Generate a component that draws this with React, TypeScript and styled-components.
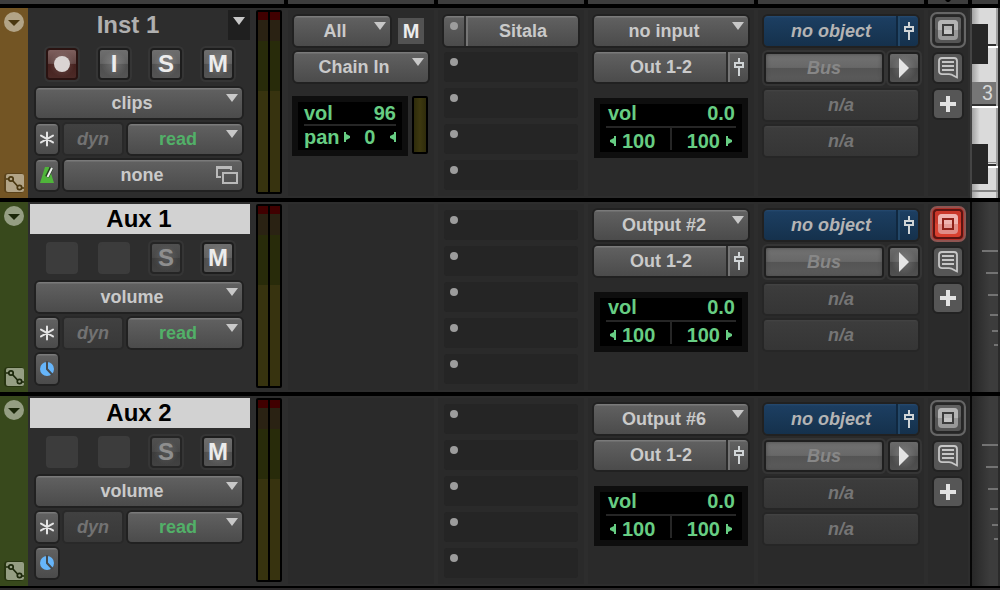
import React from "react";
import styled, { createGlobalStyle, css } from "styled-components";

const GlobalStyle = createGlobalStyle`
  * { box-sizing: border-box; }
  body { margin: 0; background: #000; font-family: "Liberation Sans", Arial, sans-serif; }
  button, select { font-family: inherit; font-weight: bold; margin: 0; padding: 0; border: 0; }
  svg { display: block; flex: none; }
`;

const columns = css`
  display: grid;
  grid-template-columns: 28px 258fr 150fr 150fr 170fr 170fr 44px 30px;
`;

const Page = styled.main`
  display: flex;
  flex-direction: column;
  gap: 4px;
  min-height: 100vh;
`;

const HeaderStrip = styled.div`
  ${columns}
  height: 4px;
`;

const HeaderCell = styled.div<{ $span?: number; $first?: boolean }>`
  grid-column: span ${(p) => p.$span ?? 1};
  margin: 0 2px 0 ${(p) => (p.$first ? 0 : 2)}px;
  background: #3d3d3d;
  display: flex;
  justify-content: center;
`;

const TrackRow = styled.section`
  ${columns}
  min-height: 190px;
`;

const Footer = styled.div`
  flex: 1;
  margin-top: -2px;
  background: #2a2829;
`;

const ColorBar = styled.div<{ $color: string }>`
  display: flex;
  flex-direction: column;
  justify-content: space-between;
  align-items: center;
  padding: 4px 0;
  background: ${(p) => p.$color};
`;

const BarButton = styled.button`
  background: none;
`;

const TrackCell = styled.div`
  display: flex;
  gap: 4px;
  padding-right: 4px;
  background: #2d2d2d;
`;

const TrackControls = styled.div`
  flex: 1;
  min-width: 0;
  display: flex;
  flex-direction: column;
  gap: 10px;
  padding: 2px;
`;

const NameBar = styled.div<{ $selected: boolean }>`
  display: flex;
  height: 30px;
  background: ${(p) => (p.$selected ? "#d2d2d2" : "transparent")};
`;

const NameButton = styled.button<{ $selected: boolean }>`
  flex: 1;
  padding-right: 2px;
  background: none;
  font-size: 24px;
  line-height: 30px;
  color: ${(p) => (p.$selected ? "#000" : "#b0b0b0")};
`;

const PlaylistButton = styled.button`
  width: 22px;
  height: 30px;
  padding: 6px 4px 0;
  background: #1f1f1f;
`;

const ModeButtons = styled.div`
  display: flex;
  gap: 24px;
  padding-left: 18px;
`;

const modeColors = {
  normal: { back: "radial-gradient(circle, #ffffff30, #ffffff00 65%), linear-gradient(#6e6e6e, #626262 48%, #4e4e4e 50%, #545454)", edge: "#1d1d1d", text: "#ececec" },
  record: { back: "radial-gradient(circle, #ffffff28, #ffffff00 65%), linear-gradient(#7e5f5d, #624543 48%, #46211e 50%, #4c2a27)", edge: "#2a1311", text: "#d9d3d2" },
  dim: { back: "radial-gradient(circle, #ffffff20, #ffffff00 65%), linear-gradient(#505050, #484848 48%, #3c3c3c 50%, #424242)", edge: "#252525", text: "#8e8e8e" },
  empty: { back: "#3c3c3c", edge: "#3c3c3c", text: "#3c3c3c" },
};

type Mode = keyof typeof modeColors;

const ModeButton = styled.button<{ $mode: Mode }>`
  display: flex;
  align-items: center;
  justify-content: center;
  width: 28px;
  height: 28px;
  border-radius: 2px;
  font-size: 24px;
  line-height: 28px;
  background: ${(p) => modeColors[p.$mode].back};
  color: ${(p) => modeColors[p.$mode].text};
  box-shadow: 0 0 0 2px ${(p) => modeColors[p.$mode].edge}${(p) => (p.$mode === "empty" ? "" : ", 0 0 0 4px #353535")};
`;

const ControlList = styled.div`
  display: flex;
  flex-direction: column;
  gap: 6px;
  padding: 0 8px 0 6px;
`;

const ControlLine = styled.div`
  display: flex;
  gap: 6px;
`;

const face = css`
  background: linear-gradient(#7a7a7a 0, #7a7a7a 1px, #606060 2px, #4b4b4b 100%);
  box-shadow: 0 0 0 2px #212121;
`;

const SelectBox = styled.div`
  position: relative;
  display: flex;
  flex: 1;
  min-width: 0;
  height: 30px;
  border-radius: 4px;
  ${face}
`;

const SelectInput = styled.select<{ $green?: boolean }>`
  appearance: none;
  width: 100%;
  height: 30px;
  padding: 0 14px 0 0;
  background: none;
  text-align: center;
  text-align-last: center;
  font-size: 18px;
  color: ${(p) => (p.$green ? "#52b068" : "#cacaca")};
`;

const SelectArrow = styled.span`
  position: absolute;
  top: 6px;
  right: 4px;
  pointer-events: none;
`;

const IconButton = styled.button`
  display: flex;
  align-items: center;
  justify-content: center;
  width: 22px;
  height: 30px;
  border-radius: 4px;
  ${face}
`;

const DynButton = styled.button`
  width: 58px;
  height: 30px;
  border-radius: 3px;
  background: linear-gradient(#414141, #383838);
  box-shadow: 0 0 0 2px #292929;
  color: #727272;
  font-size: 18px;
  font-style: italic;
`;

const WindowButton = styled.button`
  display: flex;
  align-items: center;
  flex: 1;
  height: 30px;
  padding: 0 4px;
  border-radius: 4px;
  color: #cacaca;
  font-size: 18px;
  ${face}
`;

const Grow = styled.span`
  flex: 1;
`;

const Meter = styled.div`
  display: flex;
  gap: 2px;
  margin: 2px 0 4px;
  padding: 2px;
  width: 26px;
  background: #000;
  border-radius: 2px;
`;

const MeterBar = styled.div`
  flex: 1;
  background: linear-gradient(
    #400000 0, #400000 8px,
    #2a2213 8px, #2a2213 29px,
    #282b0a 29px, #282b0a 79px,
    #37330f 79px
  );
`;

const Cell = styled.div`
  display: flex;
  flex-direction: column;
  gap: 6px;
  padding: 8px;
  background: #2a2a2a;
  box-shadow: inset 0 0 0 2px #2d2d2d;
`;

const MidiMute = styled.button`
  width: 26px;
  height: 26px;
  margin: 2px 4px 2px 2px;
  background: #525252;
  color: #ececec;
  font-size: 20px;
  line-height: 26px;
`;

const LowerLine = styled.div`
  display: flex;
  gap: 4px;
  margin: 8px 0 0 -2px;
`;

const ScreenBox = styled.div`
  flex: 1;
  height: 60px;
  border: 6px solid #0e0e0e;
  background: #000;
  color: #67cd83;
  font-size: 20px;
  font-weight: bold;
  padding: 0 6px;
`;

const ScreenLine = styled.div`
  display: flex;
  align-items: center;
  justify-content: space-between;
  height: 22px;
  line-height: 22px;
`;

const ScreenTop = styled(ScreenLine)`
  border-bottom: 2px solid #262626;
  height: 24px;
`;

const PanLine = styled(ScreenLine)`
  gap: 4px;
`;

const PanValue = styled.span`
  flex: 1;
  text-align: center;
`;

const OutputScreen = styled(ScreenBox)`
  flex: none;
  margin-top: 10px;
`;

const OutputTop = styled(ScreenTop)`
  align-items: flex-start;
  padding: 0 1px 0 2px;
  line-height: 18px;
`;

const PanPair = styled.div`
  display: flex;
`;

const PanHalf = styled.div`
  display: flex;
  align-items: center;
  gap: 6px;
  flex: 1;
  height: 22px;
  padding: 4px 4px 0;
  line-height: 22px;
  & + & {
    justify-content: flex-end;
    border-left: 2px solid #262626;
  }
`;

const SmallMeter = styled.div`
  width: 16px;
  height: 58px;
  border: 2px solid #000;
  border-radius: 2px;
  background: linear-gradient(90deg, #2f2c0c, #3d380f 50%, #2f2c0c);
`;

const Split = styled.div<{ $blue?: boolean }>`
  display: flex;
  height: 30px;
  border-radius: 4px;
  ${face}
  ${(p) => p.$blue && css`background: linear-gradient(#264a70 0, #1c3e61 2px, #15314c 100%);`}
`;

const SplitMain = styled.button<{ $blue?: boolean }>`
  flex: 1;
  background: none;
  font-size: 18px;
  color: ${(p) => (p.$blue ? "#b4b4b4" : "#cacaca")};
  font-style: ${(p) => (p.$blue ? "italic" : "normal")};
`;

const SplitSide = styled.button<{ $blue?: boolean }>`
  display: flex;
  align-items: center;
  justify-content: center;
  width: 20px;
  background: none;
  box-shadow: -2px 0 0 0 ${(p) => (p.$blue ? "#102840" : "#2c2c2c")};
  border-left: 2px solid ${(p) => (p.$blue ? "#234869" : "#757575")};
`;

const InsertBypass = styled.button`
  width: 22px;
  padding: 6px 6px 16px;
  background: none;
  border-right: 2px solid #2c2c2c;
`;

const InsertName = styled(SplitMain)`
  border-left: 2px solid #757575;
`;

const EmptySlot = styled.button`
  height: 30px;
  padding: 6px 6px 16px;
  border-radius: 3px;
  background: #252525;
`;

const Dot = styled.span`
  display: block;
  width: 8px;
  height: 8px;
  border-radius: 4px;
  background: #9c9c9c;
`;

const BusLine = styled.div`
  display: flex;
  gap: 8px;
  height: 32px;
  padding: 2px 0 2px 2px;
`;

const BusButton = styled.button`
  flex: 1;
  height: 28px;
  border-radius: 2px;
  background: linear-gradient(#727272, #686868 48%, #545454 50%, #5c5c5c);
  box-shadow: 0 0 0 2px #1f1f1f, 0 0 0 4px #353535, inset 0 0 4px #484848;
  color: #878787;
  font-size: 18px;
  font-style: italic;
`;

const PlayButton = styled.button`
  display: flex;
  align-items: center;
  justify-content: center;
  width: 28px;
  height: 28px;
  border-radius: 2px;
  background: radial-gradient(circle, #ffffff30, #ffffff00 65%), linear-gradient(#6a6a6a, #5c5c5c 48%, #484848 50%, #505050);
  box-shadow: 0 0 0 2px #1f1f1f, 0 0 0 4px #353535;
`;

const EmptyParam = styled.button`
  height: 30px;
  border-radius: 3px;
  background: linear-gradient(#444 0, #3c3c3c 2px, #353535 100%);
  box-shadow: 0 0 0 2px #262626;
  color: #757575;
  font-size: 18px;
  font-style: italic;
`;

const ToolCell = styled(Cell)`
  align-items: center;
  gap: 8px;
  padding: 4px 0;
`;

const TargetButton = styled.button`
  height: 34px;
  background: none;
`;

const ToolButton = styled.button`
  display: flex;
  align-items: center;
  justify-content: center;
  width: 28px;
  height: 28px;
  border-radius: 4px;
  background: #565656;
  box-shadow: 0 0 0 2px #222;
`;

const Lane = styled.div<{ $light?: boolean }>`
  border-left: 2px solid ${(p) => (p.$light ? "#444" : "#060606")};
  border-right: 2px solid #2a2a2a;
  background: linear-gradient(90deg, #272727, #3c3c3c 18px);
`;

const DownArrow = () => (
  <svg width="12" height="8" viewBox="0 0 12 8" fill="#c8c8c8"><path d="M0 0H12L6 8Z" /></svg>
);

const PlaylistArrow = () => (
  <svg width="14" height="22" viewBox="0 0 14 22" fill="#c8c8c8"><path d="M1 0H13L7 8Z" /></svg>
);

const FaderIcon = () => (
  <svg width="10" height="18" viewBox="0 0 10 18" fill="none" stroke="#d0d4d6" strokeWidth="2">
    <path d="M5 0V4M5 10V18M1 5H9V9H1Z" />
  </svg>
);

const PanMark = ({ flip }: { flip?: boolean }) => (
  <svg width="6" height="10" viewBox="0 0 6 10" fill="#67cd83">
    <path d={flip ? "M6 0V10H4V8L0 6V4L4 2V0Z" : "M0 0V10H2V8L6 6V4L2 2V0Z"} />
  </svg>
);

const FoldIcon = ({ tint, ink }: { tint: string; ink: string }) => (
  <svg width="20" height="20" viewBox="0 0 20 20">
    <circle cx="10" cy="10" r="10" fill={tint} />
    <path d="M4 8H16L10 14Z" fill={ink} />
  </svg>
);

const CurveIcon = ({ tint, ink, edge }: { tint: string; ink: string; edge: string }) => (
  <svg width="22" height="22" viewBox="0 0 22 22">
    <rect x="1" y="1" width="20" height="20" rx="4" fill={edge} />
    <rect x="3" y="2" width="18" height="18" rx="2" fill={tint} />
    <g stroke={ink} strokeWidth="1.700" fill={tint}>
      <path d="M3 7H6.500M9.500 8.500L14.500 14M18 16H21" />
      <circle cx="8" cy="7" r="2.200" />
      <circle cx="16.500" cy="15.500" r="2.200" />
    </g>
  </svg>
);

const AsteriskIcon = () => (
  <svg width="16" height="16" viewBox="0 0 16 16" stroke="#e4e4e4" strokeWidth="2" strokeLinecap="round">
    <path d="M8 1.500V14.500M2 4.600L14 11.400M14 4.600L2 11.400" />
  </svg>
);

const MetronomeIcon = () => (
  <svg width="16" height="18" viewBox="0 0 16 18">
    <path d="M6 1H10L15 17H1Z" fill="#4fb53a" />
    <path d="M8 11L12.500 2" stroke="#26401f" strokeWidth="4" />
    <path d="M8.500 11L13 2" stroke="#f2f2f2" strokeWidth="2" />
  </svg>
);

const TimebaseIcon = () => (
  <svg width="16" height="16" viewBox="0 0 16 16">
    <circle cx="8" cy="8" r="7" fill="#66b5fa" />
    <path d="M8 0V8L13.500 14" fill="none" stroke="#454a4e" strokeWidth="2" />
  </svg>
);

const WindowsIcon = () => (
  <svg width="22" height="18" viewBox="0 0 22 18" fill="none" stroke="#b9b9b9" strokeWidth="2">
    <path d="M5 11H1V1H15V4" />
    <path d="M1 1.500H15" strokeWidth="3" />
    <path d="M7 7H21V17H7Z" />
  </svg>
);

const PlayIcon = () => (
  <svg width="10" height="20" viewBox="0 0 10 20" fill="#e4e4e4"><path d="M0 0L10 10L0 20Z" /></svg>
);

const TargetIcon = ({ active }: { active?: boolean }) => {
  const c = active
    ? { ring: "#8f5552", gap: "#5a1512", base: "#c9372a", low: "#d9402f", hi: "#efb3af", lo: "#e08e88", ink: "#8f2119" }
    : { ring: "#666", gap: "#262626", base: "#616161", low: "#555", hi: "#b4b4b4", lo: "#999", ink: "#3c3c3c" };
  return (
    <svg width="36" height="36" viewBox="0 0 36 36">
      <rect x="1" y="1" width="34" height="34" rx="6" fill={active ? "#b0332b" : "#2f2f2f"} stroke={c.ring} strokeWidth="2" />
      <rect x="3" y="3" width="30" height="30" rx="4" fill={c.gap} />
      <rect x="5" y="5" width="26" height="26" rx="3" fill={c.low} />
      <rect x="5" y="5" width="26" height="13" rx="3" fill={c.base} />
      <rect x="8" y="8" width="20" height="20" rx="4" fill={c.lo} />
      <path d="M8 18V12a4 4 0 0 1 4-4H24a4 4 0 0 1 4 4V18Z" fill={c.hi} />
      <rect x="13" y="13" width="10" height="10" fill={c.hi} stroke={c.ink} strokeWidth="2" />
      <rect x="14" y="18" width="8" height="4" fill={active ? "#e59c97" : "#c4c4c4"} />
    </svg>
  );
};

const CommentIcon = () => (
  <svg width="20" height="22" viewBox="0 0 20 22" fill="none" stroke="#c6c6c6" strokeWidth="1.800">
    <path d="M4 1H16a3 3 0 0 1 3 3V20.500C16.500 19.500 14.500 17.200 11 17.200H4a3 3 0 0 1-3-3V4a3 3 0 0 1 3-3Z" />
    <path d="M4 5H16M4 9H16M4 13H16" />
  </svg>
);

const PlusIcon = () => (
  <svg width="16" height="16" viewBox="0 0 16 16" stroke="#e2e2e2" strokeWidth="4"><path d="M8 0V16M0 8H16" /></svg>
);

const Keyboard = () => (
  <svg width="26" height="190" viewBox="0 0 26 190">
    <defs>
      <linearGradient id="keys">
        <stop offset="0" stopColor="#a2a2a2" />
        <stop offset="0.300" stopColor="#dadada" />
      </linearGradient>
    </defs>
    <rect width="26" height="190" fill="url(#keys)" />
    <rect x="24" width="2" height="190" fill="#a0a0a0" />
    <path d="M16 36H24v2H16ZM0 96H24v2H0ZM16 156H24v2H16Z" fill="#303030" />
    <path d="M16 38H26v2H16ZM0 98H26v2H0ZM16 158H26v2H16Z" fill="#fff" />
    <path d="M16 154H24v1H16ZM0 182H26v2H0Z" fill="#858585" />
    <rect y="74" width="24" height="22" fill="#767676" />
    <path d="M0 16H16V56H0ZM0 136H16V176H0Z" fill="#262626" />
    <text x="10" y="92" fontSize="20" fill="#d8d8d8" fontFamily="Roboto, sans-serif">3</text>
  </svg>
);

const Ticks = () => (
  <svg width="26" height="190" viewBox="0 0 26 190">
    <path d="M10 48H26v2H10ZM14 70H26v2H14ZM16 92H26v2H16ZM18 112H26v2H18ZM20 128H26v2H20ZM22 142H26v2H22Z" fill="#737373" />
  </svg>
);

const Picker = ({ label, value, green }: { label: string; value: string; green?: boolean }) => (
  <SelectBox>
    <SelectInput aria-label={label} $green={green} defaultValue={value}>
      <option>{value}</option>
    </SelectInput>
    <SelectArrow><DownArrow /></SelectArrow>
  </SelectBox>
);

type Track = {
  name: string;
  instrument: boolean;
  view: string;
  input: string;
  insert?: string;
  active?: boolean;
  bar: { color: string; tint: string; ink: string; edge: string };
};

const brown = { color: "#735524", tint: "#b2a487", ink: "#4a370f", edge: "#5b431b" };
const green = { color: "#38491c", tint: "#959e83", ink: "#1b270a", edge: "#273510" };

const tracks: Track[] = [
  { name: "Inst 1", instrument: true, view: "clips", input: "no input", insert: "Sitala", bar: brown },
  { name: "Aux 1", instrument: false, view: "volume", input: "Output #2", active: true, bar: green },
  { name: "Aux 2", instrument: false, view: "volume", input: "Output #6", bar: green },
];

const TrackHead = ({ track }: { track: Track }) => (
  <TrackCell>
    <TrackControls>
      <NameBar $selected={!track.instrument}>
        <NameButton $selected={!track.instrument}>{track.name}</NameButton>
        {track.instrument && <PlaylistButton aria-label="Playlists"><PlaylistArrow /></PlaylistButton>}
      </NameBar>
      <ModeButtons>
        {track.instrument ? (
          <>
            <ModeButton $mode="record" aria-label="Record">
              <svg width="16" height="16" viewBox="0 0 16 16"><circle cx="8" cy="8" r="8" fill="#dad4d3" /></svg>
            </ModeButton>
            <ModeButton $mode="normal">I</ModeButton>
          </>
        ) : (
          <>
            <ModeButton $mode="empty" aria-label="Record" disabled />
            <ModeButton $mode="empty" aria-label="Input" disabled />
          </>
        )}
        <ModeButton $mode={track.instrument ? "normal" : "dim"}>S</ModeButton>
        <ModeButton $mode="normal">M</ModeButton>
      </ModeButtons>
      <ControlList>
        <ControlLine><Picker label="Track view" value={track.view} /></ControlLine>
        <ControlLine>
          <IconButton aria-label="Freeze"><AsteriskIcon /></IconButton>
          <DynButton>dyn</DynButton>
          <Picker label="Automation mode" value="read" green />
        </ControlLine>
        <ControlLine>
          <IconButton aria-label="Timebase">{track.instrument ? <MetronomeIcon /> : <TimebaseIcon />}</IconButton>
          {track.instrument && <WindowButton><Grow>none</Grow><WindowsIcon /></WindowButton>}
        </ControlLine>
      </ControlList>
    </TrackControls>
    <Meter><MeterBar /><MeterBar /></Meter>
  </TrackCell>
);

const InstrumentCell = () => (
  <Cell>
    <ControlLine>
      <Picker label="MIDI input" value="All" />
      <MidiMute>M</MidiMute>
    </ControlLine>
    <ControlLine><Picker label="MIDI output" value="Chain In" /></ControlLine>
    <LowerLine>
      <ScreenBox>
        <ScreenTop><span>vol</span><span>96</span></ScreenTop>
        <PanLine><span>pan</span><PanMark /><PanValue>0</PanValue><PanMark flip /></PanLine>
      </ScreenBox>
      <SmallMeter />
    </LowerLine>
  </Cell>
);

const InsertsCell = ({ insert }: { insert?: string }) => (
  <Cell>
    {insert && (
      <Split>
        <InsertBypass aria-label="Insert selector"><Dot /></InsertBypass>
        <InsertName>{insert}</InsertName>
      </Split>
    )}
    {Array.from({ length: insert ? 4 : 5 }, (_, i) => (
      <EmptySlot key={i} aria-label="Empty insert"><Dot /></EmptySlot>
    ))}
  </Cell>
);

const IoCell = ({ input }: { input: string }) => (
  <Cell>
    <ControlLine><Picker label="Input" value={input} /></ControlLine>
    <Split>
      <SplitMain>Out 1-2</SplitMain>
      <SplitSide aria-label="Output window"><FaderIcon /></SplitSide>
    </Split>
    <OutputScreen>
      <OutputTop><span>vol</span><span>0.0</span></OutputTop>
      <PanPair>
        <PanHalf><PanMark flip /><span>100</span></PanHalf>
        <PanHalf><span>100</span><PanMark /></PanHalf>
      </PanPair>
    </OutputScreen>
  </Cell>
);

const ObjectCell = () => (
  <Cell>
    <Split $blue>
      <SplitMain $blue>no object</SplitMain>
      <SplitSide $blue aria-label="Object window"><FaderIcon /></SplitSide>
    </Split>
    <BusLine>
      <BusButton>Bus</BusButton>
      <PlayButton aria-label="Object toggle"><PlayIcon /></PlayButton>
    </BusLine>
    <EmptyParam disabled>n/a</EmptyParam>
    <EmptyParam disabled>n/a</EmptyParam>
  </Cell>
);

export default function App() {
  return (
    <>
      <GlobalStyle />
      <Page>
        <HeaderStrip>
          <HeaderCell $span={2} $first />
          <HeaderCell /><HeaderCell /><HeaderCell /><HeaderCell />
          <HeaderCell><svg width="6" height="2" viewBox="0 0 6 2"><path d="M0 0H6L4 2H2Z" fill="#000" /></svg></HeaderCell>
          <HeaderCell />
        </HeaderStrip>
        {tracks.map((track) => (
          <TrackRow key={track.name} aria-label={track.name}>
            <ColorBar $color={track.bar.color}>
              <BarButton aria-label="Track options"><FoldIcon tint={track.bar.tint} ink={track.bar.ink} /></BarButton>
              <BarButton aria-label="Automation lanes"><CurveIcon {...track.bar} /></BarButton>
            </ColorBar>
            <TrackHead track={track} />
            {track.instrument ? <InstrumentCell /> : <Cell />}
            <InsertsCell insert={track.insert} />
            <IoCell input={track.input} />
            <ObjectCell />
            <ToolCell>
              <TargetButton aria-label="Target"><TargetIcon active={track.active} /></TargetButton>
              <ToolButton aria-label="Comments"><CommentIcon /></ToolButton>
              <ToolButton aria-label="Add"><PlusIcon /></ToolButton>
            </ToolCell>
            <Lane $light={track.instrument}>{track.instrument ? <Keyboard /> : <Ticks />}</Lane>
          </TrackRow>
        ))}
        <Footer />
      </Page>
    </>
  );
}
